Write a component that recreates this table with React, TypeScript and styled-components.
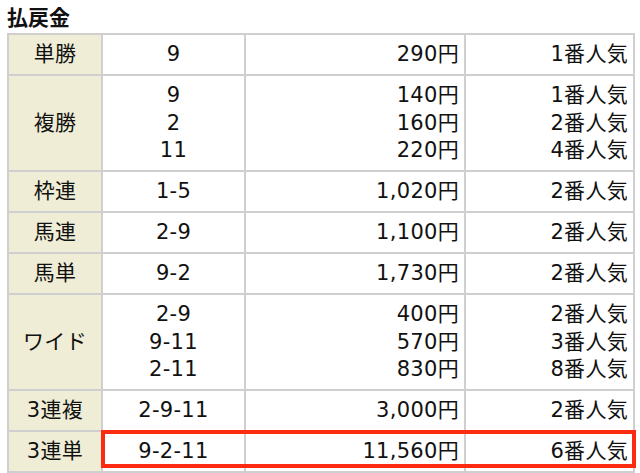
import React from "react";
import styled, { createGlobalStyle } from "styled-components";

const Global = createGlobalStyle`
  html, body { margin: 0; padding: 0; background: #fff; }
  body { font-family: "DejaVu Sans", "Noto Sans CJK JP", sans-serif; color: #111; }
`;

const Page = styled.div`
  padding: 3px 0 0 7px;
  width: 627px;
`;

const Title = styled.h2`
  margin: 0 0 3px 0;
  font-family: "Noto Sans CJK JP", sans-serif;
  font-size: 21px;
  font-weight: 700;
  line-height: 27px;
  height: 27px;
`;

const TableWrap = styled.div`
  position: relative;
`;

const Table = styled.table`
  border-collapse: collapse;
  table-layout: fixed;
  width: 626px;
  font-family: "DejaVu Sans", "Noto Sans CJK JP", sans-serif;
  font-size: 21px;
  letter-spacing: 0.3px;
  color: #111;
`;

const Th = styled.th`
  background: #efedd6;
  border: 2px solid #cfcfcf;
  font-weight: normal;
  text-align: center;
  padding: 6px 2px 5.5px;
  vertical-align: middle;
  line-height: 27.5px;
`;

const Td = styled.td<{ $align: "center" | "right" }>`
  border: 2px solid #cfcfcf;
  text-align: ${(p) => p.$align};
  padding: 6px ${(p) => (p.$align === "right" ? "5px" : "2px")} 5.5px 2px;
  vertical-align: middle;
  white-space: nowrap;
`;

const Line = styled.div`
  display: block;
  height: 27.5px;
  line-height: 27.5px;
`;

const Highlight = styled.div`
  position: absolute;
  box-sizing: border-box;
  left: 94px;
  right: -2px;
  top: 397px;
  height: 38px;
  border: 4px solid #fb2a10;
  pointer-events: none;
`;

type Row = { label: string; items: [string, string, string][] };

const rows: Row[] = [
  { label: "単勝", items: [["9", "290円", "1番人気"]] },
  {
    label: "複勝",
    items: [
      ["9", "140円", "1番人気"],
      ["2", "160円", "2番人気"],
      ["11", "220円", "4番人気"],
    ],
  },
  { label: "枠連", items: [["1-5", "1,020円", "2番人気"]] },
  { label: "馬連", items: [["2-9", "1,100円", "2番人気"]] },
  { label: "馬単", items: [["9-2", "1,730円", "2番人気"]] },
  {
    label: "ワイド",
    items: [
      ["2-9", "400円", "2番人気"],
      ["9-11", "570円", "3番人気"],
      ["2-11", "830円", "8番人気"],
    ],
  },
  { label: "3連複", items: [["2-9-11", "3,000円", "2番人気"]] },
  { label: "3連単", items: [["9-2-11", "11,560円", "6番人気"]] },
];

export default function App() {
  return (
    <Page>
      <Global />
      <Title>払戻金</Title>
      <TableWrap>
        <Table>
          <colgroup>
            <col style={{ width: 94 }} />
            <col style={{ width: 143 }} />
            <col style={{ width: 220 }} />
            <col style={{ width: 169 }} />
          </colgroup>
          <tbody>
            {rows.map((r) => (
              <tr key={r.label}>
                <Th>{r.label}</Th>
                <Td $align="center">
                  {r.items.map((it, i) => (
                    <Line key={i}>{it[0]}</Line>
                  ))}
                </Td>
                <Td $align="right">
                  {r.items.map((it, i) => (
                    <Line key={i}>{it[1]}</Line>
                  ))}
                </Td>
                <Td $align="right">
                  {r.items.map((it, i) => (
                    <Line key={i}>{it[2]}</Line>
                  ))}
                </Td>
              </tr>
            ))}
          </tbody>
        </Table>
        <Highlight />
      </TableWrap>
    </Page>
  );
}
